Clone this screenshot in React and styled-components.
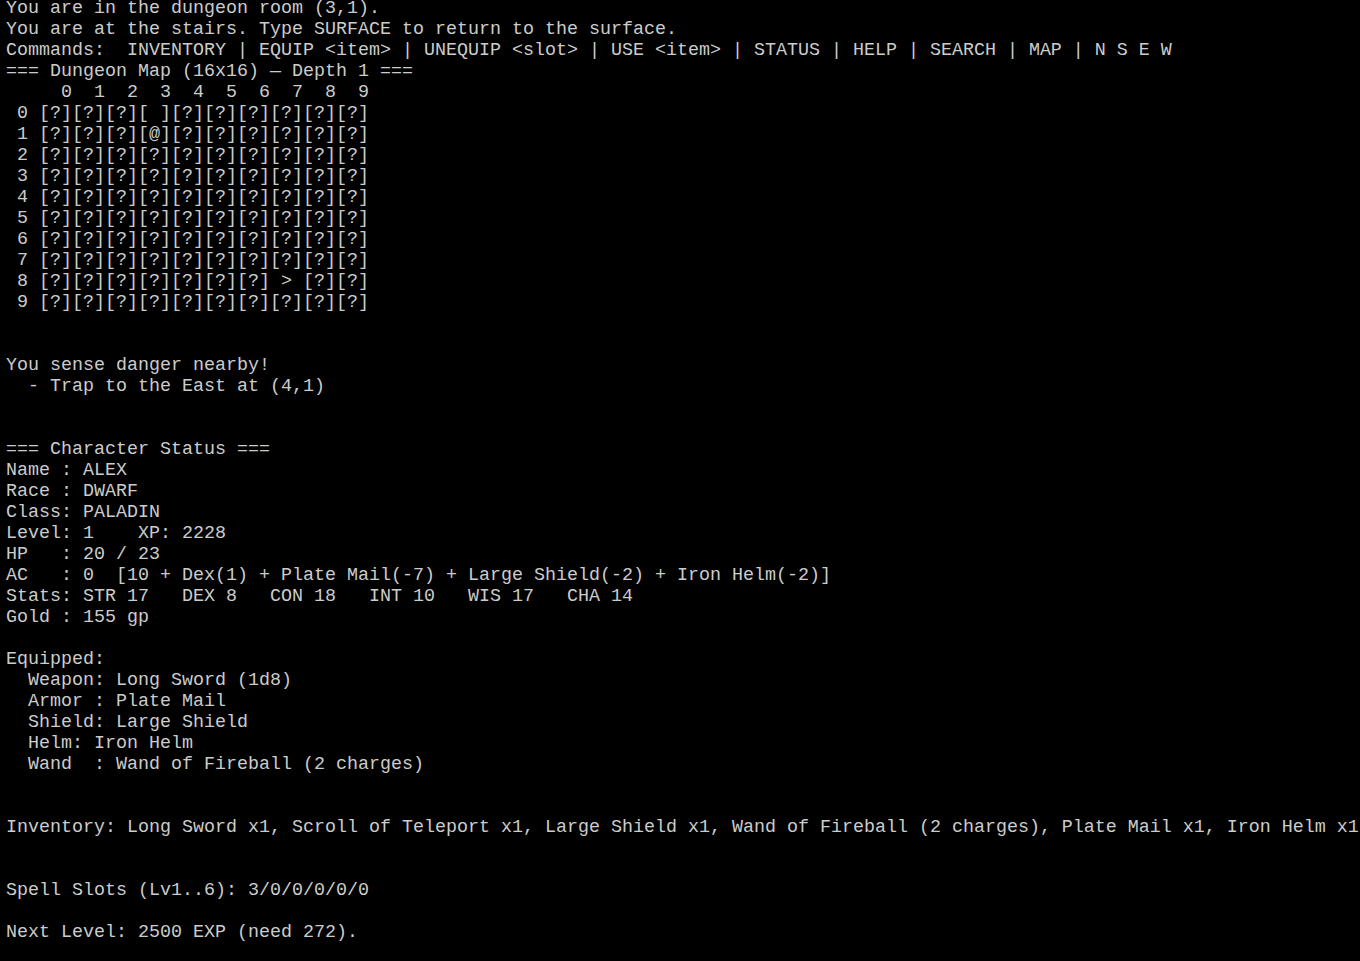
import React from 'react';
import styled, { createGlobalStyle } from 'styled-components';

const GlobalStyle = createGlobalStyle`
  html, body {
    margin: 0;
    padding: 0;
    background: #000;
    overflow: hidden;
  }
`;

const Screen = styled.div`
  width: 1360px;
  height: 961px;
  background: #000;
  overflow: hidden;
`;

const Output = styled.pre`
  margin: -2px 0 0 6px;
  font-family: "Liberation Mono", "Courier New", monospace;
  font-size: 18.33px;
  line-height: 21px;
  color: #cccccc;
  white-space: pre;
`;

const Line = styled.div`
  height: 21px;
`;

const cells = (special = {}) =>
  Array.from({ length: 10 }, (_, i) => special[i] || '[?]').join('');

const mapRows = Array.from({ length: 10 }, (_, r) => {
  let special = {};
  if (r === 0) special = { 3: '[ ]' };
  if (r === 1) special = { 3: '[@]' };
  if (r === 8) special = { 7: ' > ' };
  return ` ${r} ${cells(special)}`;
});

const lines = [
  'You are in the dungeon room (3,1).',
  'You are at the stairs. Type SURFACE to return to the surface.',
  'Commands:  INVENTORY | EQUIP <item> | UNEQUIP <slot> | USE <item> | STATUS | HELP | SEARCH | MAP | N S E W',
  '=== Dungeon Map (16x16) \u2014 Depth 1 ===',
  '     0  1  2  3  4  5  6  7  8  9',
  ...mapRows,
  '',
  '',
  'You sense danger nearby!',
  '  - Trap to the East at (4,1)',
  '',
  '',
  '=== Character Status ===',
  'Name : ALEX',
  'Race : DWARF',
  'Class: PALADIN',
  'Level: 1    XP: 2228',
  'HP   : 20 / 23',
  'AC   : 0  [10 + Dex(1) + Plate Mail(-7) + Large Shield(-2) + Iron Helm(-2)]',
  'Stats: STR 17   DEX 8   CON 18   INT 10   WIS 17   CHA 14',
  'Gold : 155 gp',
  '',
  'Equipped:',
  '  Weapon: Long Sword (1d8)',
  '  Armor : Plate Mail',
  '  Shield: Large Shield',
  '  Helm: Iron Helm',
  '  Wand  : Wand of Fireball (2 charges)',
  '',
  '',
  'Inventory: Long Sword x1, Scroll of Teleport x1, Large Shield x1, Wand of Fireball (2 charges), Plate Mail x1, Iron Helm x1',
  '',
  '',
  'Spell Slots (Lv1..6): 3/0/0/0/0/0',
  '',
  'Next Level: 2500 EXP (need 272).',
];

export default function App() {
  return (
    <Screen>
      <GlobalStyle />
      <Output>
        {lines.map((text, i) => (
          <Line key={i}>{text}</Line>
        ))}
      </Output>
    </Screen>
  );
}
